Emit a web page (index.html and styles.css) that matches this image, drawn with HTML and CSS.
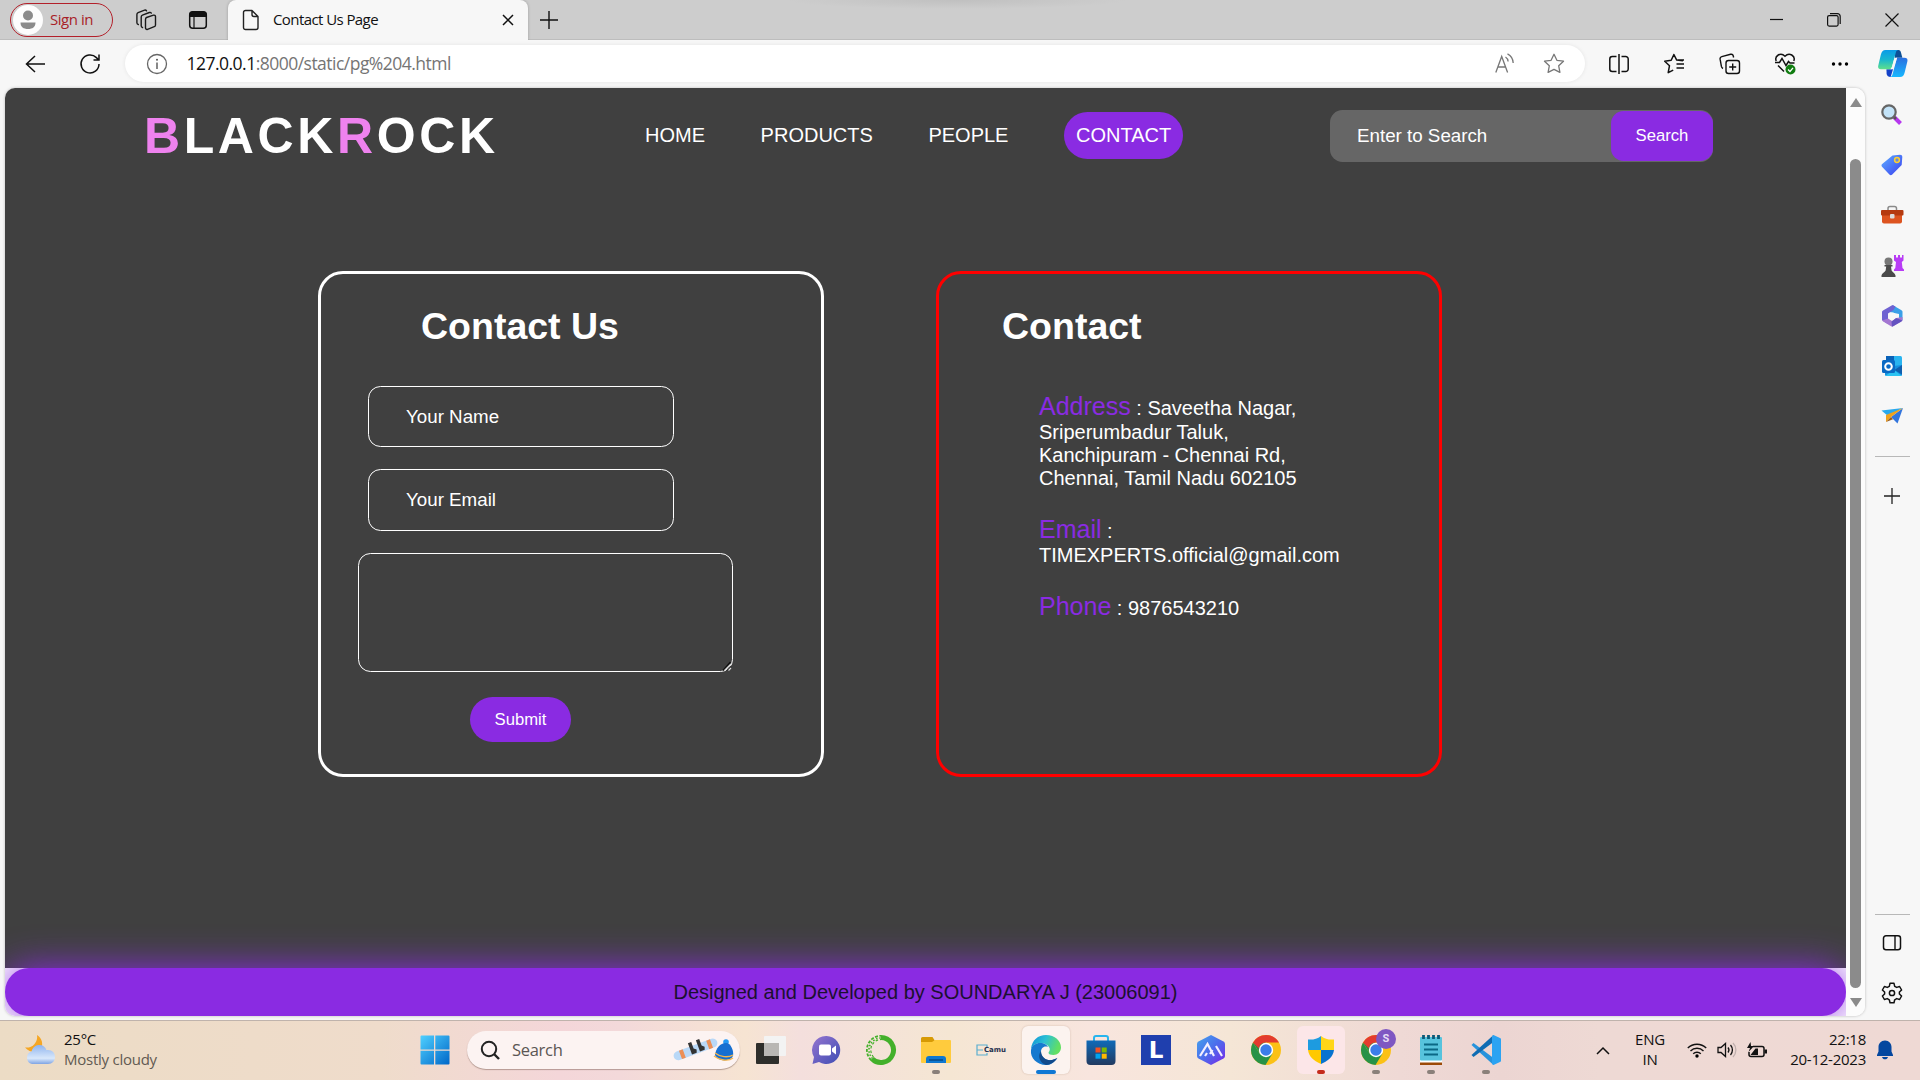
FILE: index.html
```html
<!DOCTYPE html>
<html lang="en">
<head>
<meta charset="utf-8">
<title>Contact Us Page</title>
<link rel="stylesheet" href="styles.css">
</head>
<body>
<div class="screen">
  <header class="tabbar">
    <div class="signin">
      <svg class="avatar" width="30" height="30" viewBox="0 0 30 30"><circle cx="15" cy="15" r="15" fill="#fdfdfd"/><circle cx="15" cy="10.500" r="5" fill="#8b8b8b"/><path d="M7.500 17.500h15c0 4.500-3 6.500-7.500 6.500s-7.500-2-7.500-6.500z" fill="#8b8b8b"/></svg>
      <span>Sign in</span>
    </div>
    <svg class="ic ic-spaces" width="22" height="22" viewBox="0 0 22 22"><g fill="none" stroke="#1a1a1a" stroke-width="1.400" stroke-linejoin="round" stroke-linecap="round"><path d="M11.500 8.500l7-2.300c1-.3 2 .2 2 1.300v8.500c0 .8-.4 1.400-1.200 1.700l-6.800 2.600c-1 .4-2-.2-2-1.300v-8.500c0-1 .3-1.700 1-2z"/><path d="M7.500 18.500c-1-.2-1.300-.8-1.300-1.700V8c0-.9.400-1.500 1.200-1.800l7-2.700c.8-.3 1.500 0 1.900.6"/><path d="M3.300 15.500c-1-.2-1.400-.8-1.400-1.700V5.500c0-.9.400-1.500 1.200-1.800l6.500-2.500c.9-.3 1.500 0 1.900.6"/></g></svg>
    <svg class="ic ic-tabs" width="20" height="20" viewBox="0 0 20 20"><rect x="1.700" y="1.700" width="16.600" height="16.600" rx="3" fill="none" stroke="#111" stroke-width="1.500"/><path d="M1.500 7V4.500a3 3 0 0 1 3-3h11a3 3 0 0 1 3 3V7z" fill="#111"/><path d="M6 7v11" stroke="#111" stroke-width="1.200"/></svg>
    <div class="tab">
      <svg width="18" height="22" viewBox="0 0 18 22"><path d="M3.500 1.500H10l6 6v11a2 2 0 0 1-2 2H3.500a2 2 0 0 1-2-2v-15a2 2 0 0 1 2-2zM10 1.500v4a2 2 0 0 0 2 2h4" fill="none" stroke="#222" stroke-width="1.400" stroke-linejoin="round"/></svg>
      <span class="tab-title">Contact Us Page</span>
      <svg width="12" height="12" viewBox="0 0 12 12"><path d="M1 1l10 10M11 1L1 11" stroke="#111" stroke-width="1.500"/></svg>
    </div>
    <svg class="ic-plus" width="18" height="18" viewBox="0 0 18 18"><path d="M9 0v18M0 9h18" stroke="#111" stroke-width="1.400"/></svg>
    <div class="winctl">
      <svg width="13" height="14" viewBox="0 0 13 14"><path d="M0 6.500h13" stroke="#111" stroke-width="1.200"/></svg>
      <svg width="14" height="14" viewBox="0 0 14 14"><g fill="none" stroke="#111" stroke-width="1.200"><rect x=".6" y="2.600" width="10.500" height="10.500" rx="1.500"/><path d="M3 .7h7.500a2.700 2.700 0 0 1 2.700 2.700V11"/></g></svg>
      <svg width="14" height="14" viewBox="0 0 14 14"><path d="M.5.500l13 13M13.500.500l-13 13" stroke="#111" stroke-width="1.200"/></svg>
    </div>
  </header>

  <div class="toolbar">
    <svg class="back" width="20" height="18" viewBox="0 0 20 18"><path d="M10 1L1.500 9l8.500 8M1.500 9H20" fill="none" stroke="#111" stroke-width="1.500"/></svg>
    <svg class="reload" width="22" height="22" viewBox="0 0 22 22"><path d="M20 11a9 9 0 1 1-2.600-6.400L19.500 6.800M20 1.500V7h-5.500" fill="none" stroke="#111" stroke-width="1.500"/></svg>
    <div class="address">
      <svg width="22" height="22" viewBox="0 0 22 22"><circle cx="11" cy="11" r="9.500" fill="none" stroke="#666" stroke-width="1.300"/><path d="M11 9.500V16" stroke="#555" stroke-width="1.400"/><circle cx="11" cy="6.700" r="1" fill="#555"/></svg>
      <span class="url"><b>127.0.0.1</b>:8000/static/pg%204.html</span>
      <svg class="aloud" width="20" height="21" viewBox="0 0 20 21"><g fill="none" stroke="#777" stroke-width="1.300"><path d="M.8 19.500L6.700 3.500l5.900 16M3 14h7.500"/><path d="M10.500 4c1.600 1 2.500 2.500 2.600 4.500M12.500.8c3.400 1.700 5.500 4.700 5.700 9.200"/></g></svg>
      <svg width="22" height="21" viewBox="0 0 22 21"><path d="M11 1.300l2.900 6 6.600.9-4.800 4.600 1.200 6.600L11 16.300l-5.900 3.100 1.200-6.600L1.500 8.200l6.600-.9z" fill="none" stroke="#777" stroke-width="1.300" stroke-linejoin="round"/></svg>
    </div>
    <div class="tools">
      <svg width="22" height="22" viewBox="0 0 22 22"><g fill="none" stroke="#111" stroke-width="1.500"><path d="M8.500 3.500H4.300a2.500 2.500 0 0 0-2.500 2.500v10a2.500 2.500 0 0 0 2.500 2.500h4.200M13.500 3.500h4.200a2.500 2.500 0 0 1 2.500 2.500v10a2.500 2.500 0 0 1-2.500 2.500h-4.200M11 1v20"/></g></svg>
      <svg width="22" height="22" viewBox="0 0 22 22"><g fill="none" stroke="#111" stroke-width="1.500" stroke-linejoin="round"><path d="M20 7.800l-6.300-.7L10.900 1.500 8.200 7.300l-6.500.9 4.800 4.500-1.300 7 5-2.500M13.500 11H21M13.500 15H21M14.500 7H21"/></g></svg>
      <svg width="22" height="22" viewBox="0 0 22 22"><g fill="none" stroke="#111" stroke-width="1.400"><rect x="7" y="7.500" width="13.500" height="13" rx="2.500"/><path d="M13.700 10.500v7M10.200 14h7M4 15.500C3 15 2.600 14.300 2.400 13.400L1.100 6.200c-.2-1.300.5-2.300 1.700-2.600l8.800-2.300c1.300-.3 2.400.4 2.700 1.700l.3 1.500"/></g></svg>
      <svg width="23" height="23" viewBox="0 0 23 23"><path d="M2.200 9C.2 3.800 6.700-.2 11 4.200 15.300-.2 21.800 3.800 19.800 9M4 13.500l6 6" fill="none" stroke="#111" stroke-width="1.500"/><path d="M1 10.500h4.500l2.500-4 4 7 2.500-4 1.500 1.500H20.500" fill="none" stroke="#111" stroke-width="1.500"/><circle cx="16.500" cy="17.500" r="5" fill="#107c10"/><path d="M14 17.500l2 2 3-3.700" fill="none" stroke="#fff" stroke-width="1.300"/></svg>
      <svg width="20" height="20" viewBox="0 0 20 20"><circle cx="3.500" cy="10" r="1.700"/><circle cx="10" cy="10" r="1.700"/><circle cx="16.500" cy="10" r="1.700"/></svg>
    </div>
    <svg class="copilot" width="30" height="27" viewBox="0 0 32 28" preserveAspectRatio="none"><defs><linearGradient id="cp1" x1="0" y1="0" x2="0" y2="1"><stop offset="0" stop-color="#0a9be8"/><stop offset=".5" stop-color="#19b7cf"/><stop offset="1" stop-color="#5fe08a"/></linearGradient><linearGradient id="cp2" x1="0" y1="0" x2="0" y2="1"><stop offset="0" stop-color="#2a6fe0"/><stop offset="1" stop-color="#18b8ff"/></linearGradient></defs><path d="M18 0h4c1.500 0 2 1 2.500 2.500L26 8h-8z" fill="#0c4f96"/><path d="M9 20h7l-2.500 8c-2.500 0-3.800-1-4.300-3z" fill="#1442c8"/><path d="M20.500 8H28c3 0 4 1.500 3.300 4L28.500 23c-.9 3.500-2.200 5-5 5H12.500c1.800 0 2.500-1 3-2.800l4-14.200c.3-1.300.5-2 1-3z" fill="url(#cp2)"/><path d="M8 0h14c-1.800 0-2.600 1-3.100 3L15 17c-.6 2-1.800 3-3.800 3H3c-2.500 0-3.300-1.500-2.700-4L3 5c.9-3.500 2.200-5 5-5z" fill="url(#cp1)"/><path d="M17.300 9c.8-.8 1.700-1 3.200-1-.6 1-.8 1.700-1 2.500L16.500 19c-.8.900-1.700 1-3.500 1 1-.5 1.600-1.500 2-3z" fill="#f7f7f7"/></svg>
  </div>

  <div class="middle">
    <div class="viewport">
      <main class="page">
        <nav class="navbar">
          <div class="brand"><span>B</span>LACK<span>R</span>OCK</div>
          <div class="links"><a>HOME</a><a>PRODUCTS</a><a>PEOPLE</a><a class="current">CONTACT</a></div>
          <div class="search"><input type="text" placeholder="Enter to Search"><button>Search</button></div>
        </nav>
        <div class="cards">
          <form class="card form-card">
            <h1>Contact Us</h1>
            <input type="text" placeholder="Your Name">
            <input type="text" class="email" placeholder="Your Email">
            <div class="message">
              <textarea></textarea>
              <svg class="grip" width="10" height="10" viewBox="0 0 10 10"><path d="M1 9.500L8.500 1" stroke="#111" stroke-width="1.500"/><path d="M2.500 9.500L9 3M6.500 9.500L9 7" stroke="#ddd" stroke-width="1.200"/><path d="M4.500 9.800L9.200 5" stroke="#222" stroke-width="1"/></svg>
            </div>
            <button type="button">Submit</button>
          </form>
          <section class="card info-card">
            <h1>Contact</h1>
            <p><span>Address</span> : Saveetha Nagar,<br>Sriperumbadur Taluk,<br>Kanchipuram - Chennai Rd,<br>Chennai, Tamil Nadu 602105</p>
            <p><span>Email</span> :<br>TIMEXPERTS.official@gmail.com</p>
            <p><span>Phone</span> : 9876543210</p>
          </section>
        </div>
        <footer class="footer">Designed and Developed by SOUNDARYA J (23006091)</footer>
      </main>
      <div class="scrollbar">
        <svg width="12" height="9" viewBox="0 0 12 9"><path d="M6 0l6 9H0z" fill="#8b8b8b"/></svg>
        <div class="thumb"></div>
        <svg width="12" height="9" viewBox="0 0 12 9"><path d="M6 9l6-9H0z" fill="#8b8b8b"/></svg>
      </div>
    </div>
    <aside class="sidebar">
      <svg width="24" height="24" viewBox="0 0 24 24"><path d="M14 14l6.500 6.500" stroke="#b637ee" stroke-width="4"/><path d="M13 13l3 3" stroke="#555" stroke-width="2.500"/><circle cx="9" cy="9" r="6.700" fill="#c3e3f8" stroke="#666" stroke-width="2.200"/></svg>
      <svg width="24" height="24" viewBox="0 0 24 24"><defs><linearGradient id="tg" x1="0" y1="0" x2="1" y2="1"><stop offset="0" stop-color="#5eb0ff"/><stop offset="1" stop-color="#3a3df0"/></linearGradient></defs><path d="M12.500 2.500L20 1.700c1.500 0 2.300.8 2.300 2.300l-.6 8L12 21.700c-.8.700-1.800.7-2.600-.2L2 13.700c-.8-.9-.6-1.800.2-2.600z" fill="url(#tg)"/><circle cx="17" cy="7" r="2.400" fill="#6b8bd8" stroke="#ffd02e" stroke-width="1.500"/></svg>
      <svg width="24" height="24" viewBox="0 0 24 24"><path d="M8 7V5.500C8 4 8.800 3.500 10 3.500h4.500c1.200 0 2 .5 2 2V7" fill="none" stroke="#8a8a8a" stroke-width="1.500"/><path d="M2 11h20v7.500a2 2 0 0 1-2 2H4a2 2 0 0 1-2-2z" fill="#dd5420"/><rect x="1" y="7" width="22.500" height="5.500" rx="1" fill="#b53a10"/><rect x="10" y="11" width="4.500" height="4.500" rx="1" fill="#ddd"/></svg>
      <svg width="24" height="24" viewBox="0 0 24 24"><path d="M14 1h2v2.500h2V1h2v2.500h2V1h1.500v5.500l-1.700 1.500.7 6 1.500 1.500V17h-10v-1.500l1.300-1.500.7-6-2-1.500z" fill="#b83cf5"/><circle cx="8.500" cy="7.500" r="4" fill="#777"/><path d="M4.500 11h8v1.500H11l.5 3.500c.3 2 3.500 3 4 5.500v1.500H1.500v-1.500C2 19 5.500 18 5.700 16l.5-3.500H4.500z" fill="#4a4a4a"/></svg>
      <svg width="24" height="24" viewBox="0 0 24 24"><path d="M13 1.200l8.500 5c.8.500 1 1 1 1.800v8l-3.500 1.800V10L9.500 8z" fill="#3a9fe8"/><path d="M12.500 1L3 6.500c-.8.500-1 1-1 1.800v8L8 20V9.500l5.500-3.500 2-3.500z" fill="#6f62d2"/><path d="M2.200 16.500c.2.500.5.800 1 1.100L11 22.200c.8.500 1.500.5 2.300 0l8-4.600c.6-.4 1-.9 1.200-1.600V13l-6 1-4.500 3-4-2.500z" fill="#a477d2"/><path d="M16 14l6.500 2.500-1.500 1.300-9 5-.5-5z" fill="#6452c0"/><circle cx="12.200" cy="12" r="3.600" fill="#f7f7f7"/></svg>
      <svg width="24" height="24" viewBox="0 0 24 24"><rect x="6" y="2" width="16" height="14" rx="1.500" fill="#28b4f0"/><rect x="6" y="2" width="8" height="5" fill="#0a62b8"/><path d="M5 13l17-2v9.500a1.500 1.500 0 0 1-1.500 1.500h-14A1.500 1.500 0 0 1 5 20.500z" fill="#1490df"/><path d="M22 11v9.500L14.500 16z" fill="#0f5fae"/><path d="M5 22l9-6 8 6z" fill="#2bc3f2"/><rect x="2" y="6" width="13" height="13" rx="1.500" fill="#0a6ac4"/><circle cx="8.500" cy="12.500" r="3.300" fill="none" stroke="#fff" stroke-width="2"/></svg>
      <svg width="24" height="24" viewBox="0 0 24 24"><path d="M1.500 6.500L23 4 8 12z" fill="#29a9ee"/><path d="M23 4L11 13l6.500 6.500z" fill="#3275dd"/><path d="M23 4L6 11v7l5-5z" fill="#f0a21d"/><path d="M6 18l5-5 2 2.200z" fill="#9a5c1c"/></svg>
      <hr>
      <svg class="add" width="18" height="18" viewBox="0 0 18 18"><path d="M9 1v16M1 9h16" stroke="#222" stroke-width="1.300"/></svg>
      <hr class="lower">
      <svg width="20" height="18" viewBox="0 0 20 18"><rect x="1.500" y="1.800" width="17" height="14" rx="2.500" fill="none" stroke="#111" stroke-width="1.500"/><path d="M13 2v14" stroke="#111" stroke-width="1.400"/></svg>
      <svg class="gear" width="22" height="22" viewBox="0 0 22 22"><path d="M9 1.300h4l.7 3 2 1.100 2.900-.9 2 3.500-2.200 2v2l2.200 2-2 3.500-2.900-.9-2 1.200-.7 2.900H9l-.7-2.900-2-1.200-2.900.9-2-3.500 2.200-2v-2l-2.200-2 2-3.500 2.900.9 2-1.100z" fill="none" stroke="#111" stroke-width="1.500" stroke-linejoin="round"/><circle cx="11" cy="11" r="2.600" fill="none" stroke="#111" stroke-width="1.500"/></svg>
    </aside>
  </div>

  <div class="taskbar">
    <div class="weather">
      <svg width="32" height="32" viewBox="0 0 32 32"><defs><linearGradient id="cl" x1="0" y1="0" x2="0" y2="1"><stop offset="0" stop-color="#8fb4ee"/><stop offset=".7" stop-color="#d9e8fb"/><stop offset="1" stop-color="#7fa4e3"/></linearGradient></defs><path d="M13 1c5 3 6.500 9 4 14-3 4.500-11 4-16-1.500 3.500.5 7-.5 9.500-3.500S13.500 4 13 1z" fill="#f5a623"/><path d="M8 30a6.500 6.500 0 0 1-.5-12.500C9 12.500 12 11 15.500 11c3.500 0 6 2 7 5.200C28 15.500 31 19 31 23c0 4-2.800 7-7 7z" fill="url(#cl)"/></svg>
      <div class="weather-text"><span>25°C</span><span class="dim">Mostly cloudy</span></div>
    </div>
    <div class="apps">
      <div class="app"><svg width="30" height="30" viewBox="0 0 30 30"><defs><linearGradient id="wn" x1="0" y1="0" x2="1" y2="1"><stop offset="0" stop-color="#4fd0ff"/><stop offset="1" stop-color="#0067c8"/></linearGradient></defs><path d="M1.500.500h12.500v14H.500V1.500a1 1 0 0 1 1-1zM15.300.500h13.200a1 1 0 0 1 1 1v13H15.300zM.500 15.800H14v13.700H1.500a1 1 0 0 1-1-1zM15.300 15.800h14.200v12.700a1 1 0 0 1-1 1H15.300z" fill="url(#wn)"/></svg></div>
      <div class="tasksearch">
        <svg width="20" height="20" viewBox="0 0 20 20"><circle cx="9" cy="9" r="7.200" fill="none" stroke="#222" stroke-width="2"/><path d="M14 14l5 5" stroke="#222" stroke-width="2.400"/></svg>
        <span>Search</span>
        <svg width="62" height="28" viewBox="0 0 62 28"><g transform="rotate(-20 23 12)"><rect x="0" y="9" width="46" height="9" rx="4.500" fill="#b9d8f7"/><path d="M7 9h4v9H7zM36 9h4v9h-4z" fill="#ec8f57"/><path d="M18 5h3.500v7l2.500 2-1 3h-5zM26.500 5H30v7l2.500 2-1 3h-5z" fill="#333"/></g><circle cx="54" cy="6" r="2.800" fill="#2398f4"/><path d="M43 19c1-7 5-12 11-12 5 0 8 8 7 13-3 6-15 6-18-1z" fill="#176fd0"/><path d="M43 17c5 4 13 5 18 2M42 20c5 4 14 6 19 2" stroke="#f7b64a" stroke-width="1.300" fill="none"/></svg>
      </div>
      <div class="app"><svg width="32" height="30" viewBox="0 0 32 30"><rect x="1" y="8" width="23" height="21" rx="1" fill="#2e2e2b"/><rect x="9" y="1" width="22" height="20" rx="1" fill="#f3f3f3"/><rect x="9" y="8" width="15" height="13" fill="#b9b7b4"/></svg></div>
      <div class="app"><svg width="30" height="30" viewBox="0 0 30 30"><defs><linearGradient id="tm" x1="0" y1="0" x2="1" y2="1"><stop offset="0" stop-color="#9575d0"/><stop offset="1" stop-color="#3f4db4"/></linearGradient></defs><path d="M15.500 1a14 14 0 1 1-7.500 26l-6.500 2 1.500-7A14 14 0 0 1 15.500 1z" fill="url(#tm)"/><rect x="8" y="9.500" width="12" height="11" rx="2" fill="#fff"/><path d="M21 13.500l4-3v9l-4-3z" fill="#fff"/></svg></div>
      <div class="app"><svg width="32" height="32" viewBox="0 0 32 32"><path d="M16 3.500A12.500 12.500 0 1 1 7 24.700" fill="none" stroke="#43b02a" stroke-width="5"/><g fill="none" stroke="#43b02a"><path d="M6 26A14.200 14.200 0 0 1 16 1.800" stroke-width="1.800" stroke-dasharray="3 1.500"/><path d="M7.500 24.500A12 12 0 0 1 16 4" stroke-width="1.600" stroke-dasharray="1.500 1.800"/><path d="M8.500 23A10.500 10.500 0 0 1 16 5.500" stroke-width="1.200" stroke-dasharray="2.500 2"/></g></svg></div>
      <div class="app run"><svg width="32" height="28" viewBox="0 0 32 28"><path d="M1 2.500A1.500 1.500 0 0 1 2.500 1h10L15 5v4H1z" fill="#d79a05"/><path d="M1 6h11l3-2h15a1 1 0 0 1 1 1v21a1 1 0 0 1-1 1H2a1 1 0 0 1-1-1z" fill="#ffcb3d"/><path d="M6 27v-4a3 3 0 0 1 3-3h14a3 3 0 0 1 3 3v4z" fill="#0f78d0"/><path d="M9 24h14" stroke="#06437e" stroke-width="1.300"/></svg></div>
      <div class="app"><div class="camu"><svg width="12" height="12" viewBox="0 0 12 12"><path d="M11 3V1H1v10h10V9M1 6h6" fill="none" stroke="#5aaed0" stroke-width="1.200"/></svg><span>Camu</span></div></div>
      <div class="app active"><svg width="32" height="32" viewBox="0 0 32 32"><defs><linearGradient id="eg" x1="0" y1="0" x2="1" y2=".3"><stop offset="0" stop-color="#0e8fd8"/><stop offset=".5" stop-color="#2cc0d4"/><stop offset="1" stop-color="#62df63"/></linearGradient></defs><path d="M1 15C2 6 8 1 16 1c9 0 15 6 15 12.500 0 4.500-3.500 7.500-7.500 7.500-3 0-5-1-5-2.300 0-.7 1.300-1.200 1.300-3.400C19.800 12 15 9 10 9c-4 0-7 2-9 6z" fill="url(#eg)"/><path d="M1 16c1-5 5-7 9-7 4.500 0 7 2 8 4-4-1.500-7 1-7 5 0 5 5 9 11 8 2-.4 3.700-1 5-1.800C24 29 20 31 16 31 7 31 0 24 1 16z" fill="#1679cf"/><path d="M11 17c0 6 5 10 11 9 2-.3 4-1.200 5.500-2.200C25 28 20 31 16 31c-6-2-9-9-5-14z" fill="#114a8b"/></svg></div>
      <div class="app"><svg width="30" height="32" viewBox="0 0 30 32"><path d="M8 8V4a2 2 0 0 1 2-2h10a2 2 0 0 1 2 2v4" fill="none" stroke="#27b5ee" stroke-width="2"/><defs><linearGradient id="st" x1="0" y1="0" x2="0" y2="1"><stop offset="0" stop-color="#0f6ab8"/><stop offset="1" stop-color="#223a60"/></linearGradient></defs><path d="M.500 6.500h29V27a4 4 0 0 1-4 4h-21a4 4 0 0 1-4-4z" fill="url(#st)"/><path d="M9.500 13.500h5v5h-5z" fill="#f25022"/><path d="M15.700 13.500h5v5h-5z" fill="#7fba00"/><path d="M9.500 19.700h5v5h-5z" fill="#00a4ef"/><path d="M15.700 19.700h5v5h-5z" fill="#ffb900"/></svg></div>
      <div class="app"><div class="letter">L</div></div>
      <div class="app"><svg width="30" height="32" viewBox="0 0 30 32"><defs><linearGradient id="hx" x1="0" y1="0" x2="1" y2="1"><stop offset="0" stop-color="#45a5ec"/><stop offset=".5" stop-color="#4c6cec"/><stop offset="1" stop-color="#7a26e8"/></linearGradient></defs><path d="M15 1l12.500 6.500a3 3 0 0 1 1.500 2.500v12a3 3 0 0 1-1.500 2.500L15 31 2.500 24.500A3 3 0 0 1 1 22V10a3 3 0 0 1 1.500-2.500z" fill="url(#hx)"/><path d="M4 22l7.500-12L18 22M14 20l2.500-4M20 12l6 10M9 22l2-3" fill="none" stroke="#f3efff" stroke-width="2.200"/></svg></div>
      <div class="app"><svg width="32" height="32" viewBox="0 0 32 32"><circle cx="16" cy="16" r="15" fill="#fbc116"/><path d="M3 8.500A15 15 0 0 0 15.500 31L22.500 19.500 9.500 19.500z" fill="#279247"/><path d="M3 8.500L9.500 19.500 16 16 16 8.500z" fill="#279247"/><path d="M3 8.500A15 15 0 0 1 29 8.500H16c-4 0-6.500 2.500-7 6z" fill="#e33b2e"/><circle cx="16" cy="16" r="7.200" fill="#fff"/><circle cx="16" cy="16" r="5.700" fill="#3b7de9"/></svg></div>
      <div class="app alert"><svg width="28" height="30" viewBox="0 0 28 30"><path d="M14 1v14H1V4.500C6 5 10 4 14 1z" fill="#1d9be0"/><path d="M14 1v14h13V4.500C22 5 18 4 14 1z" fill="#ffd617"/><path d="M1 15h13v14C7 26 2 22 1 15z" fill="#ffc900"/><path d="M27 15H14v14c7-3 12-7 13-14z" fill="#0873cf"/></svg></div>
      <div class="app run"><svg width="32" height="32" viewBox="0 0 32 32"><circle cx="16" cy="16" r="15" fill="#fbc116"/><path d="M3 8.500A15 15 0 0 0 15.500 31L22.500 19.500 9.500 19.500z" fill="#279247"/><path d="M3 8.500L9.500 19.500 16 16 16 8.500z" fill="#279247"/><path d="M3 8.500A15 15 0 0 1 29 8.500H16c-4 0-6.500 2.500-7 6z" fill="#e33b2e"/><circle cx="16" cy="16" r="7.200" fill="#fff"/><circle cx="16" cy="16" r="5.700" fill="#3b7de9"/></svg><span class="badge">S</span></div>
      <div class="app run"><svg width="26" height="32" viewBox="0 0 26 32"><rect x="2" y="27" width="22" height="4" fill="#9c4a08"/><rect x="2" y="26" width="22" height="2.500" fill="#fff"/><rect x="2" y="3" width="22" height="23.500" rx="1" fill="#57c3dd"/><path d="M6 10.500h14M6 15.500h14M6 20.500h14" stroke="#0b6885" stroke-width="1.800"/><path d="M5.500 1v4M10.500 1v4M15.500 1v4M20.500 1v4" stroke="#0b5a78" stroke-width="2.800"/></svg></div>
      <div class="app run"><svg width="32" height="32" viewBox="0 0 32 32"><path d="M1.500 11l2-2 20 15v7z" fill="#2793dc"/><path d="M1.500 21l2 2L23.500 8V1z" fill="#0f6cb3"/><path d="M23.500 1l6.500 3a1.500 1.500 0 0 1 1 1.500v21a1.500 1.500 0 0 1-1 1.500l-6.500 3-1.500-1V2z" fill="#2ba3f2"/></svg></div>
    </div>
    <div class="tray">
      <svg class="chev" width="14" height="9" viewBox="0 0 14 9"><path d="M1 8l6-6 6 6" fill="none" stroke="#111" stroke-width="1.500"/></svg>
      <div class="lang"><span>ENG</span><span>IN</span></div>
      <svg class="wifi" width="20" height="16" viewBox="0 0 20 16"><g fill="none" stroke="#111" stroke-width="1.400"><path d="M.8 6a13 13 0 0 1 18.400 0M3.500 9a9.200 9.200 0 0 1 13 0M6.200 11.800a5.500 5.500 0 0 1 7.600 0"/></g><circle cx="10" cy="14" r="1.700"/></svg>
      <svg class="vol" width="20" height="16" viewBox="0 0 20 16"><g fill="none" stroke="#111" stroke-width="1.300"><path d="M1 5.500v5h3L8.500 14.500v-13L4 5.500zM11 5.500a4 4 0 0 1 0 5M13.500 3a7.500 7.500 0 0 1 0 10"/><path d="M16 1a10 10 0 0 1 0 14" stroke="#c0b0ae"/></g></svg>
      <svg class="bat" width="21" height="17" viewBox="0 0 21 17"><path d="M6 4.500h9a2 2 0 0 1 2 2v6a2 2 0 0 1-2 2H4a2 2 0 0 1-2-2V10" fill="none" stroke="#111" stroke-width="1.500"/><path d="M17.500 7.500H20v4h-2.500zM3.500 13l5-6.500H11V13z" fill="#111"/><path d="M3.500 0L0 6h3l-1.500 4L7 4H4z" fill="#111"/></svg>
      <div class="clock"><span>22:18</span><span>20-12-2023</span></div>
      <svg width="16" height="20" viewBox="0 0 16 20"><path d="M8 .5c4 0 6.500 3 6.500 6.500v4.500L16 15v1H0v-1l1.500-3.500V7C1.500 3.500 4 .5 8 .5zM5 17h6c-.5 1.700-1.500 2.300-3 2.300S5.500 18.700 5 17z" fill="#04479f"/></svg>
    </div>
  </div>
</div>
</body>
</html>
```
FILE: styles.css
```css
* { box-sizing: border-box; }
body { margin: 0; background: #f7f7f7; }
svg { display: block; flex: none; }
.screen {
  width: 1920px; height: 1080px; overflow: hidden;
  display: flex; flex-direction: column;
  font-family: "Open Sans", "Noto Sans", sans-serif; color: #111;
}

/* browser tab strip */
.tabbar {
  height: 40px; flex: none; display: flex; align-items: center;
  background: radial-gradient(ellipse 170px 9px at 957px 0, #c0c0c0, #cdcdcd) #cdcdcd;
  border-bottom: 1px solid #bdbdbd; padding-left: 10px;
}
.signin {
  width: 103px; height: 34px; border: 1.500px solid #b3202a; border-radius: 17px;
  display: flex; align-items: center; gap: 7px; padding-left: 2px;
  color: #a81f28; font-size: 15px; letter-spacing: -.45px; white-space: nowrap;
}
.signin span, .tab-title { padding-bottom: 2px; }
.ic-spaces { margin-left: 22px; }
.ic-tabs { margin-left: 31px; }
.tab {
  height: 40px; width: 300px; margin-left: 20px; align-self: flex-start;
  background: #f7f7f7; border-radius: 8px 8px 0 0; box-shadow: 0 0 3px rgba(0,0,0,.25);
  clip-path: inset(0 -4px 0 -4px);
  display: flex; align-items: center; padding: 0 14px 0 14px;
}
.tab-title { flex: 1; margin-left: 13px; font-size: 15px; letter-spacing: -.58px; }
.ic-plus { margin-left: 12px; }
.winctl { margin-left: auto; display: flex; gap: 44px; padding-right: 21.500px; }

/* address row */
.toolbar { height: 48px; flex: none; display: flex; align-items: center; background: #f7f7f7; padding: 0 0 1px 25px; }
.reload { margin-left: 34px; }
.address {
  width: 1460px; height: 37px; margin-left: 24px; border-radius: 19px; background: #fff;
  box-shadow: 0 0 4px rgba(0,0,0,.08);
  display: flex; align-items: center; padding: 0 20px 0 21px;
}
.url { flex: 1; margin-left: 18.500px; padding-bottom: 1px; font-size: 17.500px; letter-spacing: -.52px; color: #757575; }
.url b { font-weight: 400; color: #111; }
.aloud { margin-right: 28px; }
.tools { display: flex; align-items: center; gap: 33.300px; margin-left: 23px; }
.copilot { margin-left: 28px; }

/* page viewport */
.middle { flex: 1; min-height: 0; display: flex; background: #f7f7f7; padding: 0 0 4px 5px; }
.viewport {
  width: 1860px; height: 928px; display: flex; border-radius: 10px; overflow: hidden;
  background: #fff; box-shadow: 0 0 3px rgba(0,0,0,.25);
}
.page {
  width: 1841px; height: 928px; overflow: hidden; display: flex; flex-direction: column;
  background: linear-gradient(#404040 0 880px, #fff 880px);
  font-family: "Liberation Sans", Arial, sans-serif; color: #fff;
}
.navbar { height: 95px; display: flex; align-items: center; padding-left: 139px; }
.brand { width: 501px; font-size: 50px; font-weight: 700; letter-spacing: 3.600px; }
.brand span { color: violet; }
.links { display: flex; align-items: center; gap: 55.600px; width: 685px; font-size: 20px; }
.links .current { background: #8a2be2; border-radius: 25px; padding: 12px 12px; line-height: 23px; }
.search { display: flex; align-items: center; width: 383px; height: 52px; background: #666; border-radius: 12.500px; }
.search input {
  width: 281px; height: 52px; padding: 0 0 0 27px; border: 0; background: none;
  font: 18.750px "Liberation Sans", Arial, sans-serif; color: #fff;
}
.search button {
  width: 102px; height: 50px; border: 0; border-radius: 12.500px; background: #8a2be2;
  font: 16.667px "Liberation Sans", Arial, sans-serif; color: #fff;
}
::placeholder { color: #fff; opacity: 1; }

.cards { flex: 1; display: flex; gap: 112px; padding: 88px 0 0 313px; }
.card { width: 506px; height: 506px; border: 3px solid #fff; border-radius: 25px; }
.card h1 { margin: 0; font-size: 37.500px; line-height: 43px; }
.form-card { display: flex; flex-direction: column; align-items: flex-start; padding: 31px 0 0 37px; }
.form-card h1 { margin: 0 0 38px 63px; }
.form-card input {
  width: 306px; height: 61px; margin: 0 0 22px 10px; padding: 0 37px;
  border: 1px solid #fff; border-radius: 12.500px; background: none;
  font: 18.750px "Liberation Sans", Arial, sans-serif; color: #fff;
}
.form-card input.email { height: 62px; padding-bottom: 1px; }
.message { position: relative; width: 375px; height: 119px; }
.message textarea {
  display: block; width: 100%; height: 100%; resize: none;
  border: 1px solid #fff; border-radius: 12.500px; background: none; color: #fff;
}
.grip { position: absolute; right: 1px; bottom: 1px; }
.form-card button {
  width: 101px; height: 45px; margin: 25px 0 0 112px; border: 0; border-radius: 25px; background: #8a2be2;
  font: 16.667px "Liberation Sans", Arial, sans-serif; color: #fff;
}
.info-card { border-color: #f00; padding: 31px 0 0 63px; font-size: 20px; }
.info-card h1 { margin-bottom: 44px; }
.info-card p { margin: 0 0 25px 37px; line-height: normal; }
.info-card p span { font-size: 25px; color: #8a2be2; }

.footer {
  height: 48px; flex: none; border-radius: 25px; background: #8a2be2; color: #1c1030;
  box-shadow: 0 0 37px #8a2be2; font-size: 20px; line-height: 48px; text-align: center;
}

.scrollbar {
  width: 19px; background: #fcfcfc; display: flex; flex-direction: column; align-items: center;
  padding: 10px 0 9px;
}
.thumb { width: 11px; height: 829px; margin: 52px 0 10px; border-radius: 6px; background: #8b8b8b; }

/* browser side panel */
.sidebar { width: 55px; display: flex; flex-direction: column; align-items: center; padding: 15px 1px 0 0; gap: 26.200px; }
.sidebar hr { width: 35px; height: 1px; margin: 2px 0 0; border: 0; background: #b8b8b8; flex: none; }
.sidebar .add { margin-top: 3px; }
.sidebar hr.lower { margin-top: 383px; margin-bottom: -7px; }
.sidebar .gear { margin-top: 4px; }

/* taskbar */
.taskbar {
  height: 60px; flex: none; display: flex; align-items: center; border-top: 1px solid #bfb3ac; padding-bottom: 1px;
  background: linear-gradient(90deg, #ecdcc5 0, #efdccb 380px, #f4d6d9 560px, #f3d9da 620px, #f6e4d2 745px, #f4dfdd 800px, #f5e6d3 950px, #f8e5de 1090px, #f5e6d6 1230px, #efd9d5 1400px, #ecd5d2 1500px, #eed9d4 1600px, #efd9d4 1920px);
}
.weather { width: 407px; display: flex; align-items: center; gap: 8px; padding-left: 24px; }
.weather-text, .lang, .clock { display: flex; flex-direction: column; font-size: 15px; line-height: 20px; letter-spacing: -.25px; padding-bottom: 2px; }
.dim { color: #625a52; }
.apps { display: flex; align-items: center; }
.app { width: 55px; height: 48px; display: flex; align-items: center; justify-content: center; position: relative; }
.app::before { content: ""; position: absolute; inset: 0 3.500px; border-radius: 6px; }
.app > * { position: relative; }
.app.active::before { background: #fcf3ef; box-shadow: 0 0 2px rgba(120,80,60,.3); }
.app.alert::before { background: #fce6e8; }
.app.run::after, .app.active::after, .app.alert::after {
  content: ""; position: absolute; bottom: 0; left: 23.500px; width: 8px; height: 4px; border-radius: 2px; background: #8a807a;
}
.app.active::after { left: 17.500px; width: 20px; background: #0f78d4; }
.app.alert::after { background: #c42b1c; }
.tasksearch {
  width: 273px; height: 38px; margin: 0 3.500px 0 5px; border-radius: 19px; background: #fcf3f2;
  box-shadow: 0 1px 1px rgba(120,90,80,.5); display: flex; align-items: center; padding: 0 6px 0 13px;
}
.tasksearch span { flex: 1; margin-left: 12px; padding-bottom: 1px; font-size: 16.500px; letter-spacing: -.3px; color: #5b5654; }
.camu { display: flex; align-items: center; font: 700 7px "DejaVu Sans", sans-serif; color: #26314f; }
.camu span { margin-left: -4px; }
.letter { width: 30px; height: 30px; background: #1f3fae; color: #fff; font: 700 23px/30px "DejaVu Sans", sans-serif; text-align: center; }
.app > .badge {
  position: absolute; left: 27.500px; top: 3px; width: 20px; height: 20px;
  border-radius: 50%; background: #7e57c2; color: #e5dcf4; font: 700 11px/20px Roboto, sans-serif; text-align: center;
}
.tray { margin-left: auto; display: flex; align-items: center; padding-right: 27px; }
.lang { width: 30px; margin: 0 22px 0 25px; align-items: center; }
.vol { margin-left: 10px; }
.bat { margin-left: 10px; }
.clock { width: 82px; margin: 0 11px 0 16px; text-align: right; }
```
